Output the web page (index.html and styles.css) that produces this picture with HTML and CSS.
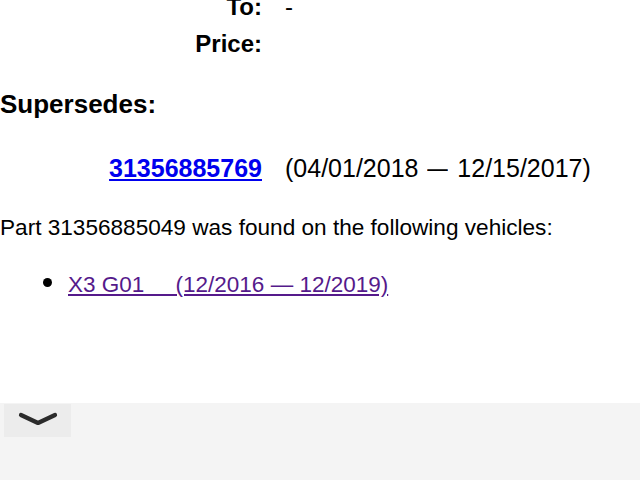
FILE: index.html
```html
<!DOCTYPE html>
<html lang="en">
<head>
<meta charset="utf-8">
<title>Part 31356885049</title>
<link rel="stylesheet" href="styles.css">
</head>
<body>
<main class="page">
  <div class="details">
    <div class="label">To:</div>
    <div class="value">-</div>
    <div class="label">Price:</div>
    <div class="value"></div>
  </div>

  <h2 class="section-title">Supersedes:</h2>

  <div class="supersedes">
    <div class="sup-part"><a class="part-link" href="#">31356885769</a></div>
    <div class="sup-dates">(04/01/2018 <span class="dash">—</span> 12/15/2017)</div>
  </div>

  <p class="found">Part 31356885049 was found on the following vehicles:</p>

  <ul class="vehicles">
    <li><a class="vehicle-link" href="#">X3 G01&nbsp;&nbsp;&nbsp;&nbsp; (12/2016 — 12/2019)</a></li>
  </ul>
</main>

<div class="toolbar">
  <button class="toggle" type="button" aria-label="Expand">
    <svg width="40" height="18" viewBox="0 0 40 18" aria-hidden="true">
      <path d="M3 4 L20 12 L37 4" fill="none" stroke="#2b2b2b" stroke-width="4.2" stroke-linecap="round" stroke-linejoin="round"/>
    </svg>
  </button>
</div>
</body>
</html>
```

FILE: styles.css
```css
html, body {
  margin: 0;
  padding: 0;
  background: #ffffff;
}

body {
  font-family: "Liberation Sans", Arial, Helvetica, sans-serif;
  color: #000000;
  overflow: hidden;
  height: 480px;
}

.page {
  margin-top: -12px;
}

.details {
  display: grid;
  grid-template-columns: 262px auto;
  column-gap: 23px;
  font-size: 24px;
  line-height: 37px;
}

.details .label {
  font-weight: bold;
  text-align: right;
}

.section-title {
  margin: 27px 0 0 0;
  font-size: 26px;
  line-height: 30px;
  font-weight: bold;
}

.supersedes {
  display: grid;
  grid-template-columns: 262px auto;
  column-gap: 23px;
  margin-top: 34px;
  font-size: 25px;
  line-height: 30px;
}

.sup-part {
  text-align: right;
}

.part-link {
  color: #0000ee;
  font-weight: bold;
  text-decoration: underline;
}

.dash {
  display: inline-block;
  transform: scaleX(0.82);
}

.found {
  margin: 31px 0 0 0;
  font-size: 22.6px;
  line-height: 28px;
}

.vehicles {
  margin: 26px 0 0 0;
  padding-left: 68px;
  font-size: 22.5px;
  line-height: 28px;
}

.vehicles li::marker {
  font-size: 30px;
}

.vehicle-link {
  color: #551a8b;
  text-decoration: underline;
}

.toolbar {
  position: fixed;
  left: 0;
  right: 0;
  bottom: 0;
  height: 77px;
  background: #f4f4f4;
  padding: 1px 0 0 4px;
  box-sizing: border-box;
}

.toggle {
  display: flex;
  align-items: center;
  justify-content: center;
  width: 67px;
  height: 33px;
  padding: 0 0 2px 0;
  border: none;
  background: #ececec;
  cursor: pointer;
}
```
